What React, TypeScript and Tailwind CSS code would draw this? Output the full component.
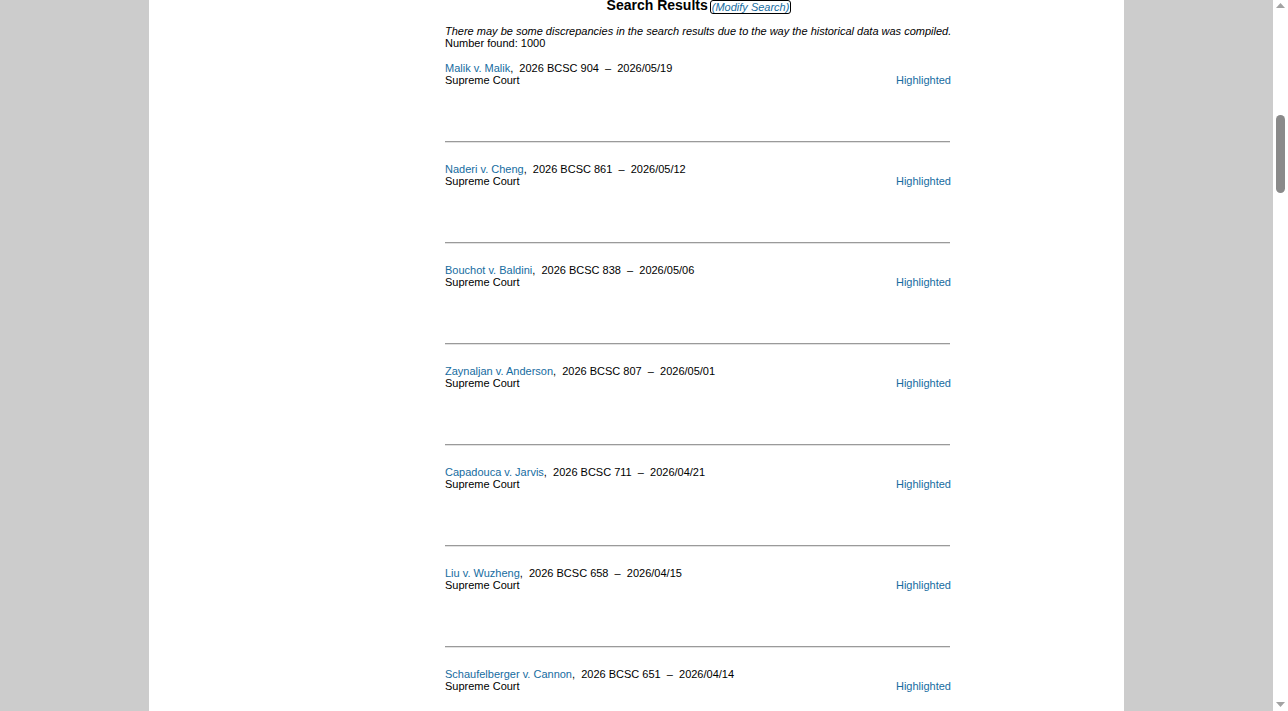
import React, { useEffect } from 'react';

interface CaseResult {
  name: string;
  citation: string;
  date: string;
}

const FIRST_RESULTS: CaseResult[] = [
  { name: 'Malik v. Malik', citation: '2026 BCSC 904', date: '2026/05/19' },
  { name: 'Naderi v. Cheng', citation: '2026 BCSC 861', date: '2026/05/12' },
  { name: 'Bouchot v. Baldini', citation: '2026 BCSC 838', date: '2026/05/06' },
  { name: 'Zaynaljan v. Anderson', citation: '2026 BCSC 807', date: '2026/05/01' },
  { name: 'Capadouca v. Jarvis', citation: '2026 BCSC 711', date: '2026/04/21' },
  { name: 'Liu v. Wuzheng', citation: '2026 BCSC 658', date: '2026/04/15' },
  { name: 'Schaufelberger v. Cannon', citation: '2026 BCSC 651', date: '2026/04/14' },
];

const MORE_NAMES = [
  'Dhillon v. Grewal', 'Thompson v. Reid', 'Huang v. Lee', 'Kovacs v. Szabo', 'Patel v. Shah',
  'Morrison v. Ng', 'Fraser v. Fraser', 'Wong v. Chan', 'Sandhu v. Gill', 'Nguyen v. Tran',
  'Becker v. Klein', 'Ross v. Campbell', 'Singh v. Sidhu', 'Olsen v. Dahl', 'Martin v. Roy',
];

// pad the page out to 50 results like the real listing
const buildResults = (): CaseResult[] => {
  const list = [...FIRST_RESULTS];
  let num = 640;
  let day = 13;
  let month = 4;
  for (let i = 0; list.length < 50; i++) {
    num -= 11;
    day -= 1;
    if (day < 1) {
      day = 28;
      month -= 1;
    }
    list.push({
      name: MORE_NAMES[i % MORE_NAMES.length],
      citation: `2026 BCSC ${num}`,
      date: `2026/${String(month).padStart(2, '0')}/${String(day).padStart(2, '0')}`,
    });
  }
  return list;
};

const results = buildResults();

const ResultRow: React.FC<{ result: CaseResult }> = ({ result }) => (
  <div>
    <div className="leading-[12px]">
      <a href="#" className="text-[#166c9f]">{result.name}</a>
      {`,\u00a0 ${result.citation} \u00a0–\u00a0 ${result.date}`}
    </div>
    <div className="flex justify-between leading-[12px]">
      <span>Supreme Court</span>
      <a href="#" className="text-[#166c9f]">Highlighted</a>
    </div>
    <div className="mt-[55px] mb-[20px] w-[505px] border-t border-b border-t-[#9a9a9a] border-b-[#e2e2e2]"></div>
  </div>
);

// window scrollbar as the browser draws it, scrolled part way down
const ScrollBar: React.FC = () => (
  <div className="fixed right-0 top-0 flex h-screen w-[15px] flex-col items-center bg-white">
    <svg width="9" height="5" viewBox="0 0 9 5" className="mt-[3px]">
      <polygon points="4.5,0 9,5 0,5" fill="#a3a3a3" />
    </svg>
    <div className="mt-[107px] h-[78px] w-[9px] rounded-full bg-[#8a8a8a]"></div>
    <div className="flex-1"></div>
    <svg width="9" height="5" viewBox="0 0 9 5" className="mb-[4px]">
      <polygon points="0,0 9,0 4.5,5" fill="#a3a3a3" />
    </svg>
  </div>
);

const App: React.FC = () => {
  useEffect(() => {
    window.scrollTo(0, 939);
  }, []);

  return (
    <div className="min-h-screen bg-[#cccccc] font-['Liberation_Sans',Arial,sans-serif] text-[11px] text-black">
      <div className="mr-[15px]">
        <div className="mx-auto w-[975px] bg-white">
          {/* page header / search form sits above the scrolled view */}
          <div className="h-[935px]"></div>

          <div className="pl-[296px] pb-[211px]">
            <div className="w-[506px]">
              <div className="flex h-[17px] items-start justify-center pl-[2px] pt-[1px]">
                <h2 className="text-[14px] font-bold leading-[16px]">Search Results</h2>
                <a
                  href="#"
                  className="ml-[2px] mt-[3px] rounded-[3px] border border-black px-[1px] text-[11px] italic leading-[12px] text-[#166c9f]"
                >
                  (Modify Search)
                </a>
              </div>

              <p className="mt-[12px] whitespace-nowrap italic leading-[12px]">
                There may be some discrepancies in the search results due to the way the historical data was compiled.
              </p>
              <p className="leading-[12px]">Number found: 1000</p>

              <div className="mt-[13px]">
                {results.map((r, i) => (
                  <ResultRow key={i} result={r} />
                ))}
              </div>
            </div>
          </div>
        </div>
      </div>
      <ScrollBar />
    </div>
  );
};

export default App;
